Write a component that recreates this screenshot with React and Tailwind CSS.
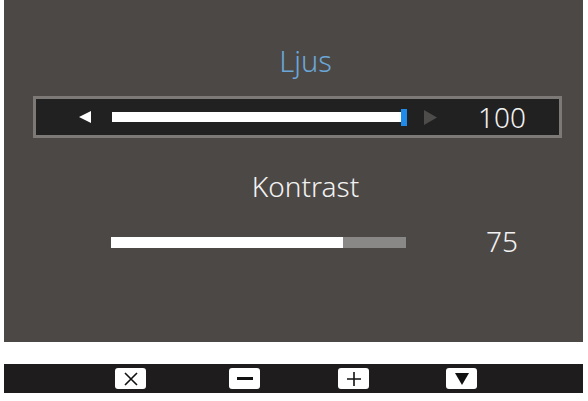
export default function App() {
  const font = { fontFamily: '"Noto Sans", "Open Sans", sans-serif' };
  return (
    <div className="w-[588px] h-[401px] bg-white relative overflow-hidden" style={font}>
      <div className="ml-[4px] w-[579px] h-[342px] bg-[#4c4846] flex flex-col">
        <div className="pt-[47px] pl-[24px] flex justify-center">
          <span className="text-[29px] leading-[28px] font-light text-[#6ba6d6]">Ljus</span>
        </div>
        <div className="mt-[21px] ml-[29px] w-[529px] h-[42px] border-[3px] border-[#7c7977] bg-[#222121] flex items-center">
          <svg width="12" height="12" viewBox="0 0 12 12" className="ml-[43px]">
            <polygon points="12,0 12,12 0,6" fill="#ffffff" />
          </svg>
          <div className="ml-[21px] w-[289px] h-[10px] bg-white" />
          <div className="w-[6px] h-[17px] bg-[#1f8ae8]" />
          <svg width="13" height="15" viewBox="0 0 13 15" className="ml-[17px]">
            <polygon points="0,0 13,7.5 0,15" fill="#4e4c4b" />
          </svg>
          <div className="flex-1 pr-[33px] text-right text-[28px] leading-[28px] font-light text-[#f2f2f2]">100</div>
        </div>
        <div className="mt-[34px] pl-[24px] flex justify-center">
          <span className="text-[28px] leading-[28px] font-light text-[#f2f2f2]">Kontrast</span>
        </div>
        <div className="mt-[27px] ml-[107px] h-[28px] flex items-start">
          <div className="mt-[10px] w-[295px] h-[11px] bg-[#8a8887] flex">
            <div className="w-[232px] h-full bg-white" />
          </div>
          <div className="w-[112px] text-right text-[28px] leading-[28px] font-light text-[#f2f2f2]">75</div>
        </div>
      </div>
      <div className="mt-[22px] ml-[4px] w-[579px] h-[29px] bg-[#1e1c1c] flex items-center pl-[111px]">
        <div className="w-[31px] h-[21px] bg-white rounded-[3px] flex items-center justify-center">
          <svg width="14" height="14" viewBox="0 0 14 14">
            <path d="M1 1 L13 13 M13 1 L1 13" stroke="#111" strokeWidth="1.6" />
          </svg>
        </div>
        <div className="ml-[83px] w-[31px] h-[21px] bg-white rounded-[3px] flex items-center justify-center">
          <svg width="16" height="4" viewBox="0 0 16 4">
            <rect x="0" y="0" width="16" height="3" fill="#111" />
          </svg>
        </div>
        <div className="ml-[78px] w-[31px] h-[21px] bg-white rounded-[3px] flex items-center justify-center">
          <svg width="14" height="14" viewBox="0 0 14 14">
            <path d="M7 0 L7 14 M0 7 L14 7" stroke="#111" strokeWidth="1.6" />
          </svg>
        </div>
        <div className="ml-[77px] w-[31px] h-[21px] bg-white rounded-[3px] flex items-center justify-center">
          <svg width="14" height="12" viewBox="0 0 14 12">
            <polygon points="0,0 14,0 7,12" fill="#111" />
          </svg>
        </div>
      </div>
    </div>
  );
}
